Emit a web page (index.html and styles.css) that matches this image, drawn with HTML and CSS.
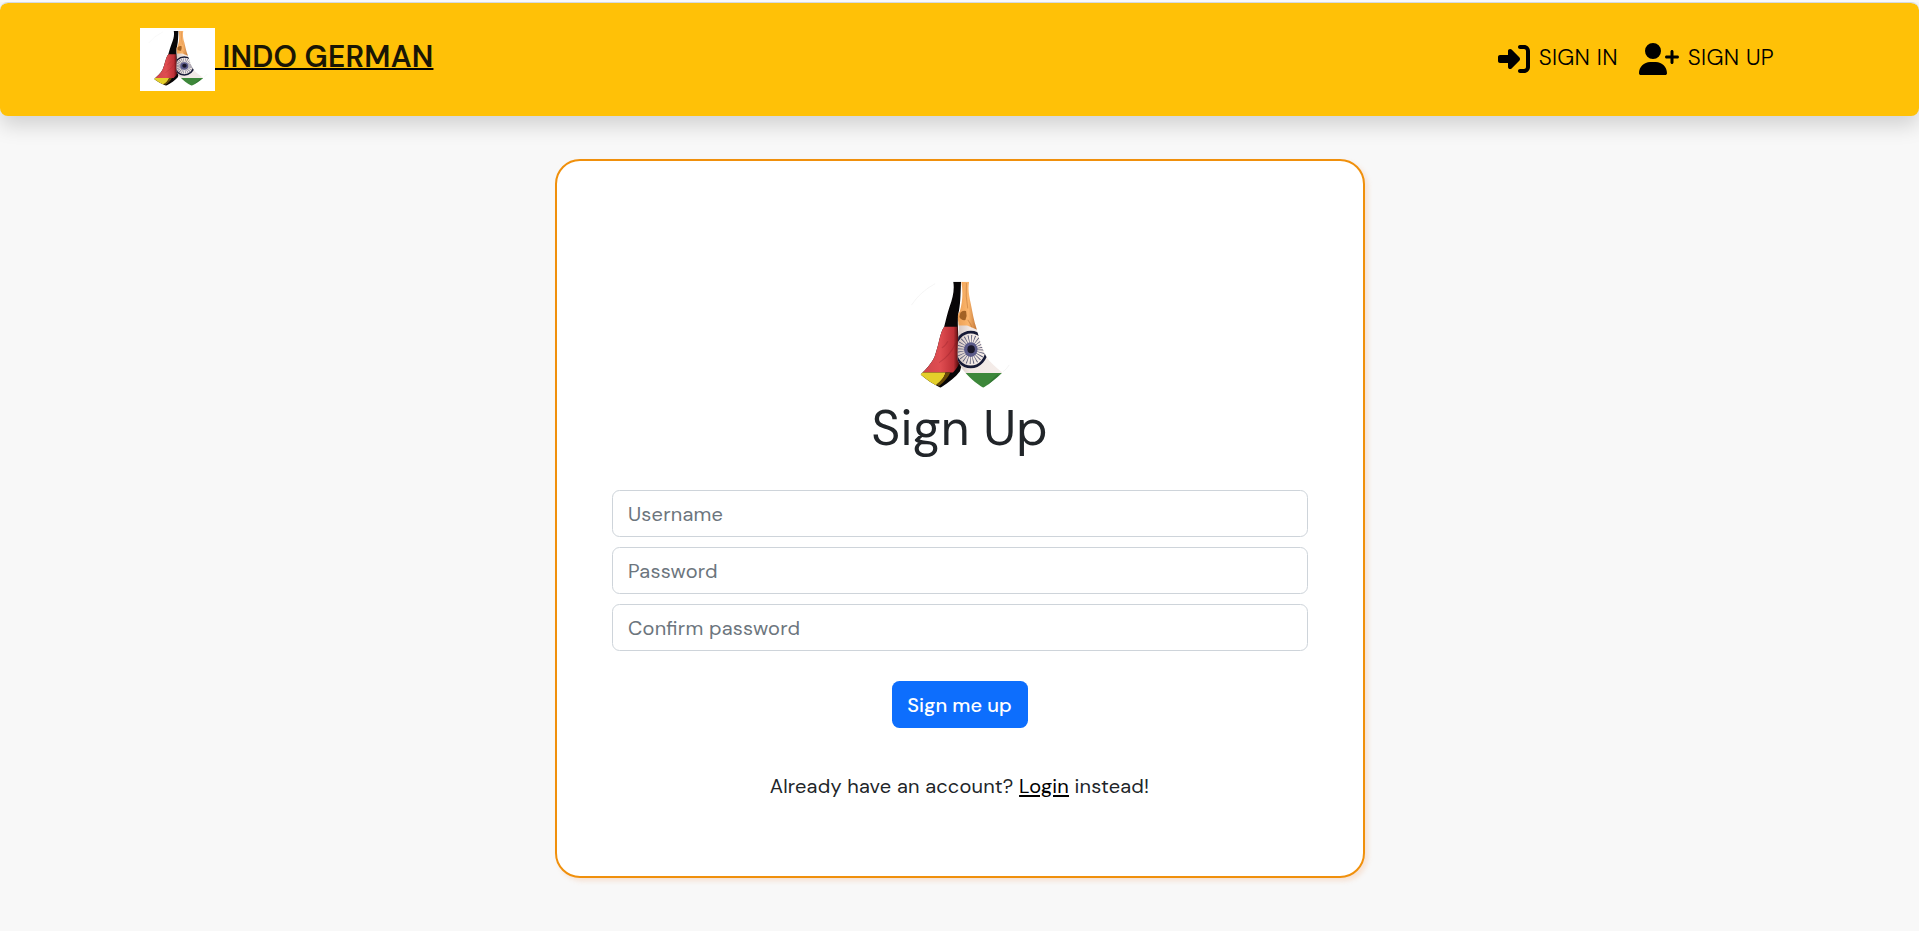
FILE: index.html
```html
<!DOCTYPE html>
<html lang="en">
<head>
<meta charset="utf-8">
<title>Indo German</title>
<link rel="stylesheet" href="styles.css">
</head>
<body>
<svg class="defs" aria-hidden="true">
  <defs>
    <linearGradient id="red" x1="0" x2="1"><stop offset="0" stop-color="#ca454b"/><stop offset=".55" stop-color="#df4d51"/><stop offset=".85" stop-color="#bd3036"/><stop offset="1" stop-color="#300"/></linearGradient>
    <linearGradient id="saffron" x1="0" x2="1"><stop offset="0" stop-color="#e99b50"/><stop offset=".6" stop-color="#fbb56c"/><stop offset="1" stop-color="#bf7334"/></linearGradient>
    <linearGradient id="white" x1="0" x2="1"><stop offset="0" stop-color="#c9bab5"/><stop offset=".3" stop-color="#f2e8e4"/><stop offset="1" stop-color="#f5eeeb"/></linearGradient>
    <clipPath id="left-hand"><path d="M219 66h23c-1 24-1 60-6 86-6 22-4 78 4 113 8 27 4 56-1 69-14 18-33 34-58 49-22-10-41-23-59-39 16-16 34-35 42-55 14-40 14-66 28-88 5-20 9-38 16-60 10-27 15-52 11-75z"/></clipPath>
    <clipPath id="right-hand"><path d="M243 66h23c-4 25 0 43 5 66 5 25 9 50 18 78 8 30 16 58 27 78 12 20 30 34 49 50-18 17-35 32-57 45-22-13-43-31-64-58l-12-25c-3-40 5-80 3-105-2-17-6-29 3-39 9-30 10-60 5-90z"/></clipPath>
    <symbol id="hands" viewBox="52 49 371 365" preserveAspectRatio="none">
      <path fill="#fff" d="M52 49h371v365H52z"/>
      <path d="M95 136q26-40 70-64M385 315q-8 14-18 20" fill="none" stroke="#f0f0f0" stroke-width="2"/>
      <g clip-path="url(#left-hand)">
        <path d="M110 60h140v330H110z" fill="#080607"/>
        <path d="M110 201h122c-2 34 9 64 7 95-2 21-9 29-21 42H110z" fill="url(#red)"/>
        <path d="M226 250q-17 38-49 58M203 244q-8 15-18 20" fill="none" stroke="#7a1520" stroke-width="3" opacity=".25"/>
        <path d="M110 338h86c-3 14-15 28-28 38l-60 4z" fill="#e4cf2b"/>
        <path d="M196 338h14c-5 13-19 30-33 40l-9-4c14-10 25-21 28-36z" fill="#694b08"/>
      </g>
      <g clip-path="url(#right-hand)">
        <path fill="url(#white)" d="M220 190h160v150H220z"/>
        <path fill="url(#saffron)" d="M225 60h65v150l-30-13h-35z"/>
        <path d="M240 159q7-9 17-5 4 14-2 27-12 2-18-9z" fill="#a36224"/>
        <path d="M262 180q10 14 12 22M258 70q-3 38 4 76" fill="none" stroke="#b97132" stroke-width="3" opacity=".5"/>
        <ellipse cx="271" cy="269" rx="47" ry="52" fill="none" stroke="#171a36" stroke-width="8"/>
        <ellipse cx="271" cy="269" rx="28" ry="30" fill="none" stroke="#555776" stroke-width="27" stroke-dasharray="2 5.6"/>
        <ellipse cx="271" cy="269" rx="20" ry="22" fill="#5b5a89"/>
        <ellipse cx="272" cy="268" rx="11" ry="12" fill="#191629"/>
        <path fill="#3d873a" d="M240 339h130v50H240z"/>
        <path d="M320 380q12-18 32-35" fill="none" stroke="#28652b" stroke-width="5" opacity=".5"/>
      </g>
    </symbol>
  </defs>
</svg>
<nav class="navbar">
  <a class="brand" href="#"><svg class="brand-logo"><use href="#hands"/></svg><span class="brand-name">&nbsp;INDO GERMAN</span></a>
  <div class="links">
    <a class="link" href="#"><svg class="icon" viewBox="0 0 512 512"><path d="M217.9 105.9L340.7 228.7c7.2 7.2 11.3 17.1 11.3 27.3s-4.1 20.1-11.3 27.3L217.9 406.1c-6.4 6.4-15 9.9-24 9.9c-18.7 0-33.9-15.2-33.9-33.9l0-62.1L32 320c-17.7 0-32-14.3-32-32l0-64c0-17.7 14.3-32 32-32l128 0 0-62.1c0-18.7 15.2-33.9 33.9-33.9c9 0 17.6 3.6 24 9.9zM352 416l64 0c17.7 0 32-14.3 32-32l0-256c0-17.7-14.3-32-32-32l-64 0c-17.7 0-32-14.3-32-32s14.3-32 32-32l64 0c53 0 96 43 96 96l0 256c0 53-43 96-96 96l-64 0c-17.7 0-32-14.3-32-32s14.3-32 32-32z"/></svg><span class="link-text">SIGN IN</span></a>
    <a class="link" href="#"><svg class="icon icon-wide" viewBox="0 0 640 512"><path d="M96 128a128 128 0 1 1 256 0A128 128 0 1 1 96 128zM0 482.3C0 383.8 79.8 304 178.3 304h91.4C368.2 304 448 383.8 448 482.3c0 16.4-13.3 29.7-29.7 29.7H29.7C13.3 512 0 498.7 0 482.3zM504 312V248H440c-13.3 0-24-10.7-24-24s10.7-24 24-24h64V136c0-13.3 10.7-24 24-24s24 10.7 24 24v64h64c13.3 0 24 10.7 24 24s-10.7 24-24 24H552v64c0 13.3-10.7 24-24 24s-24-10.7-24-24z"/></svg><span class="link-text">SIGN UP</span></a>
  </div>
</nav>
<main class="card">
  <svg class="logo"><use href="#hands"/></svg>
  <h1 class="title">Sign Up</h1>
  <form class="form">
    <input class="field" type="text" placeholder="Username">
    <input class="field" type="password" placeholder="Password">
    <input class="field" type="password" placeholder="Confirm password">
    <button class="submit" type="button">Sign me up</button>
  </form>
  <p class="note">Already have an account? <a class="login" href="#">Login</a> instead!</p>
</main>
</body>
</html>
```
FILE: styles.css
```css
* { box-sizing: border-box; }
body {
  margin: 0;
  height: 931px;
  overflow: hidden;
  border-top: 2px solid #f8f9fa;
  background: #f8f8f8;
  color: #212529;
  font: 400 20px/30px "DM Sans", Inter, sans-serif;
  font-optical-sizing: none;
  font-variation-settings: "opsz" 14;
  letter-spacing: .19px;
}
.defs { position: absolute; width: 0; height: 0; }
.navbar {
  display: flex;
  justify-content: space-between;
  align-items: flex-start;
  height: 114px;
  padding: 25px 145px 0 140px;
  border-top: 1px solid #d5dbe0;
  border-radius: 8px;
  background: #ffc107;
  background-clip: padding-box;
  box-shadow: 0 10px 20px rgba(0, 0, 0, .15);
}
.brand { display: flex; color: #000; text-decoration: none; }
.brand-logo { width: 75px; height: 63px; }
.brand-name {
  height: 42px;
  margin-top: 8px;
  font-size: 30px;
  font-weight: 600;
  line-height: 42px;
  color: #1a1605;
  text-decoration: underline #000 2px;
  text-decoration-skip-ink: none;
  text-underline-offset: 1px;
  white-space: nowrap;
}
.links { display: flex; gap: 21px; padding-top: 15px; }
.link { display: flex; gap: 9px; color: #000; text-decoration: none; }
.icon { width: 32px; height: 32px; }
.icon-wide { width: 40px; }
.link-text { font-size: 22.5px; font-weight: 300; line-height: 30px; letter-spacing: .3px; white-space: nowrap; }
.card {
  display: flex;
  flex-direction: column;
  align-items: center;
  width: 810px;
  height: 719px;
  margin: 43px auto 0;
  padding: 115px 55px 0;
  border: 2px solid #f0900c;
  border-radius: 25px;
  background: #fff;
  box-shadow: 3px 3px 5px rgba(240, 144, 80, .22);
}
.logo { width: 125px; height: 122px; flex: none; }
.title { margin: 0; font-size: 50px; font-weight: 440; line-height: 60px; letter-spacing: .25px; }
.form { display: flex; flex-direction: column; align-items: center; gap: 10px; width: 100%; margin-top: 32px; }
.field {
  width: 696px;
  height: 47px;
  padding: 0 15.5px;
  border: 1px solid #ced4da;
  border-radius: 7.5px;
  background: #fff;
  font: inherit;
  font-variation-settings: inherit;
  font-feature-settings: "liga" 1;
  letter-spacing: .22px;
}
.field::placeholder { color: #6c757d; opacity: 1; }
.submit {
  width: 136px;
  height: 47px;
  margin-top: 20px;
  padding: 0;
  border: 0;
  border-radius: 7.5px;
  background: #0d6efd;
  color: #fff;
  font: inherit;
  font-variation-settings: inherit;
  font-weight: 500;
}
.note { margin: 43px 0 0; white-space: nowrap; }
.login { color: #000; text-decoration: underline 2px; text-underline-offset: 2px; }
```
